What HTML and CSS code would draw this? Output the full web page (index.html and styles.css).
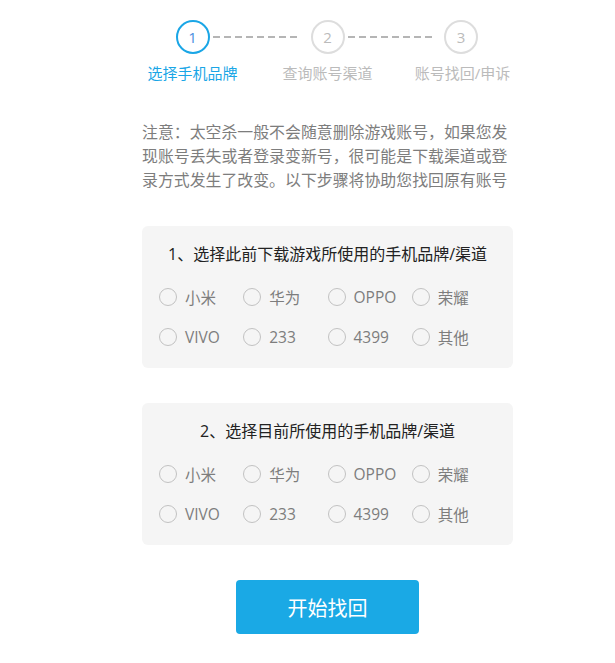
FILE: index.html
```html
<!DOCTYPE html>
<html lang="zh-CN">
<head>
<meta charset="utf-8">
<title>找回账号</title>
<link rel="stylesheet" href="styles.css">
</head>
<body>
<div class="page">
  <div class="steps">
    <div class="step active">
      <div class="circle dash-after">1</div>
      <div class="label">选择手机品牌</div>
    </div>
    <div class="step">
      <div class="circle dash-after dash-long">2</div>
      <div class="label">查询账号渠道</div>
    </div>
    <div class="step last">
      <div class="circle">3</div>
      <div class="label">账号找回/申诉</div>
    </div>
  </div>

  <p class="notice">注意：太空杀一般不会随意删除游戏账号，如果您发现账号丢失或者登录变新号，很可能是下载渠道或登录方式发生了改变。以下步骤将协助您找回原有账号</p>

  <div class="card">
    <div class="card-title">1、选择此前下载游戏所使用的手机品牌/渠道</div>
    <div class="options">
      <label class="option"><span class="radio"></span>小米</label>
      <label class="option"><span class="radio"></span>华为</label>
      <label class="option"><span class="radio"></span>OPPO</label>
      <label class="option"><span class="radio"></span>荣耀</label>
      <label class="option"><span class="radio"></span>VIVO</label>
      <label class="option"><span class="radio"></span>233</label>
      <label class="option"><span class="radio"></span>4399</label>
      <label class="option"><span class="radio"></span>其他</label>
    </div>
  </div>

  <div class="card">
    <div class="card-title">2、选择目前所使用的手机品牌/渠道</div>
    <div class="options">
      <label class="option"><span class="radio"></span>小米</label>
      <label class="option"><span class="radio"></span>华为</label>
      <label class="option"><span class="radio"></span>OPPO</label>
      <label class="option"><span class="radio"></span>荣耀</label>
      <label class="option"><span class="radio"></span>VIVO</label>
      <label class="option"><span class="radio"></span>233</label>
      <label class="option"><span class="radio"></span>4399</label>
      <label class="option"><span class="radio"></span>其他</label>
    </div>
  </div>

  <div class="actions">
    <button class="btn">开始找回</button>
  </div>
</div>
</body>
</html>
```

FILE: styles.css
```css
* { box-sizing: border-box; }
html, body { margin: 0; padding: 0; background: #fff; }
body {
  font-family: "Open Sans", "Noto Sans CJK SC", sans-serif;
  color: #333;
}
.page {
  width: 371px;
  margin-left: 142px;
  padding-top: 20px;
}
.steps {
  display: grid;
  grid-template-columns: repeat(3, 135px);
  margin: 0 -17px;
}
.step {
  display: flex;
  flex-direction: column;
  align-items: center;
}
.circle {
  position: relative;
  width: 34px;
  height: 34px;
  border: 2px solid #ddd;
  border-radius: 50%;
  color: #bbb;
  font-size: 15px;
  line-height: 30px;
  text-align: center;
}
.step.last .circle { margin-right: 3px; }
.step.active .circle { border-color: #1aa6e6; color: #4a8fe0; }
.dash-after::after {
  content: "";
  position: absolute;
  top: 14px;
  left: calc(100% + 5px);
  width: 85px;
  height: 2px;
  background: repeating-linear-gradient(90deg, #b5b5b5 0 7px, transparent 7px 11px);
}
.dash-long::after { width: 86px; }
.label {
  margin-top: 9px;
  font-size: 15px;
  line-height: 20px;
  color: #bbb;
  white-space: nowrap;
}
.step.active .label { color: #1aa6e6; }

.notice {
  margin: 37px 0 0;
  font-family: "Noto Sans CJK SC", sans-serif;
  font-size: 15.9px;
  line-height: 24px;
  color: #7d7d7d;
}

.card {
  margin-top: 34px;
  background: #f5f5f5;
  border-radius: 6px;
  padding: 16px 17px 11px;
}
.card + .card { margin-top: 35px; }
.card-title {
  text-align: center;
  font-size: 16px;
  line-height: 24px;
  color: #222;
}
.options {
  margin-top: 11px;
  display: grid;
  grid-template-columns: repeat(4, 1fr);
  grid-auto-rows: 40px;
}
.option {
  display: flex;
  align-items: center;
  gap: 8px;
  font-size: 15.5px;
  color: #7d7d7d;
}
.radio {
  width: 18px;
  height: 18px;
  border: 1px solid #c2c2c2;
  border-radius: 50%;
  flex: none;
}

.actions {
  display: flex;
  justify-content: center;
  margin-top: 35px;
}
.btn {
  width: 183px;
  height: 54px;
  border: none;
  border-radius: 4px;
  background: #1aa9e5;
  color: #fff;
  font-family: "Noto Sans CJK SC", sans-serif;
  font-size: 20px;
  padding: 0;
}
```
